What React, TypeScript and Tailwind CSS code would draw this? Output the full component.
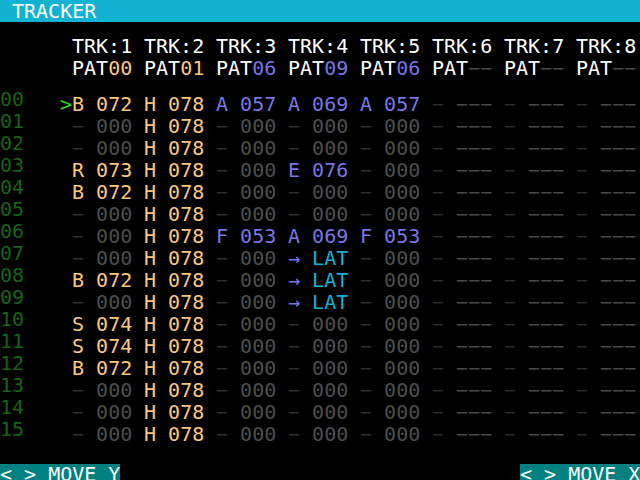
import React from "react";

type Kind = "orange" | "purple" | "empty" | "none" | "lat";
type Cell = { k: Kind; n?: string; v?: string };

const O = (n: string, v: string): Cell => ({ k: "orange", n, v });
const P = (n: string, v: string): Cell => ({ k: "purple", n, v });
const E: Cell = { k: "empty" };
const N: Cell = { k: "none" };
const L: Cell = { k: "lat" };

const t1: Cell[] = [
  O("B", "072"), E, E, O("R", "073"), O("B", "072"), E, E, E,
  O("B", "072"), E, O("S", "074"), O("S", "074"), O("B", "072"), E, E, E,
];
const t2: Cell[] = Array.from({ length: 16 }, () => O("H", "078"));
const t3: Cell[] = Array.from({ length: 16 }, (_, i) =>
  i === 0 ? P("A", "057") : i === 6 ? P("F", "053") : E
);
const t4: Cell[] = Array.from({ length: 16 }, (_, i) =>
  i === 0
    ? P("A", "069")
    : i === 3
    ? P("E", "076")
    : i === 6
    ? P("A", "069")
    : i >= 7 && i <= 9
    ? L
    : E
);
const t5: Cell[] = Array.from({ length: 16 }, (_, i) =>
  i === 0 ? P("A", "057") : i === 6 ? P("F", "053") : E
);
const tNone: Cell[] = Array.from({ length: 16 }, () => N);
const tracks = [t1, t2, t3, t4, t5, tNone, tNone, tNone];

const pats: { v: string; c: string }[] = [
  { v: "00", c: "text-[#fcc77f]" },
  { v: "01", c: "text-[#fcc77f]" },
  { v: "06", c: "text-[#7a76e6]" },
  { v: "09", c: "text-[#7a76e6]" },
  { v: "06", c: "text-[#7a76e6]" },
  { v: "−−", c: "text-[#4a4a4a]" },
  { v: "−−", c: "text-[#4a4a4a]" },
  { v: "−−", c: "text-[#4a4a4a]" },
];

function CellView({ c }: { c: Cell }) {
  if (c.k === "orange" || c.k === "purple") {
    const col = c.k === "orange" ? "text-[#fcc77f]" : "text-[#7a76e6]";
    return (
      <div className={`w-[72px] shrink-0 whitespace-pre ${col}`}>
        {c.n} {c.v}
      </div>
    );
  }
  if (c.k === "lat") {
    return (
      <div className="w-[72px] shrink-0 whitespace-pre">
        <span className="text-[#7a76e6]">→</span>{" "}
        <span className="text-[#14b2d2]">LAT</span>
      </div>
    );
  }
  if (c.k === "empty") {
    return (
      <div className="w-[72px] shrink-0 whitespace-pre">
        <span className="text-[#2e2e2e]">−</span>{" "}
        <span className="text-[#4e4e4e]">000</span>
      </div>
    );
  }
  return (
    <div className="w-[72px] shrink-0 whitespace-pre">
      <span className="text-[#2a2a2a]">−</span>{" "}
      <span className="text-[#4a4a4a]">−−−</span>
    </div>
  );
}

export default function App() {
  const rows = Array.from({ length: 16 }, (_, i) => i);
  return (
    <div className="w-[640px] h-[480px] bg-black overflow-hidden flex flex-col font-['DejaVu_Sans_Mono','Liberation_Mono',monospace] text-[20px] leading-[22px] text-white">
      <div className="h-[22px] shrink-0 bg-[#12b2d2] pl-[12px] text-white">
        TRACKER
      </div>

      <div className="mt-[13px] pl-[72px] flex flex-col">
        <div className="flex">
          {Array.from({ length: 8 }, (_, i) => (
            <div key={i} className="w-[72px] shrink-0 whitespace-pre">
              TRK:{i + 1}
            </div>
          ))}
        </div>
        <div className="flex">
          {pats.map((p, i) => (
            <div key={i} className="w-[72px] shrink-0 whitespace-pre">
              PAT<span className={p.c}>{p.v}</span>
            </div>
          ))}
        </div>
      </div>

      <div className="mt-[9px] flex">
        <div className="w-[60px] shrink-0 flex flex-col text-[#176317]">
          {rows.map((r) => (
            <div key={r} className="h-[22px]">
              {String(r).padStart(2, "0")}
            </div>
          ))}
        </div>
        <div className="mt-[5px] flex flex-col">
          {rows.map((r) => (
            <div key={r} className="h-[22px] flex">
              <div className="w-[12px] shrink-0 text-[#22dd22]">
                {r === 0 ? ">" : ""}
              </div>
              {tracks.map((t, ti) => (
                <CellView key={ti} c={t[r]} />
              ))}
            </div>
          ))}
        </div>
      </div>

      <div className="mt-auto h-[16px] shrink-0 flex justify-between leading-[20px]">
        <div className="w-[120px] h-[16px] overflow-hidden bg-[#008080] whitespace-pre text-white">
          {"< > MOVE Y"}
        </div>
        <div className="w-[120px] h-[16px] overflow-hidden bg-[#008080] whitespace-pre text-white">
          {"< > MOVE X"}
        </div>
      </div>
    </div>
  );
}
